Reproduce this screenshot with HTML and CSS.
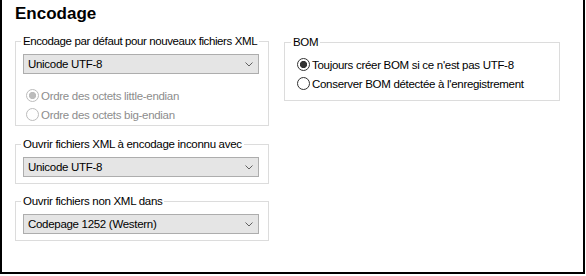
FILE: index.html
```html
<!DOCTYPE html>
<html lang="fr">
<head>
    <meta charset="UTF-8">
    <meta name="viewport" content="width=device-width, initial-scale=1.0">
    <title>Encodage</title>
    <link rel="stylesheet" href="styles.css">
</head>
<body>
    <div class="panel">
        <h1 class="title">Encodage</h1>

        <div class="columns">
            <div class="col-left">
                <fieldset class="group group-default">
                    <legend>Encodage par défaut pour nouveaux fichiers XML</legend>
                    <div class="select">
                        <span>Unicode UTF-8</span>
                        <svg class="chevron" width="8" height="5" viewBox="0 0 8 5"><path d="M0.5 0.5 L4 4 L7.5 0.5" fill="none" stroke="#606060" stroke-width="1"/></svg>
                    </div>
                    <div class="radios disabled">
                        <div class="radio checked"><span class="circle"></span>Ordre des octets little-endian</div>
                        <div class="radio"><span class="circle"></span>Ordre des octets big-endian</div>
                    </div>
                </fieldset>

                <fieldset class="group group-unknown">
                    <legend>Ouvrir fichiers XML à encodage inconnu avec</legend>
                    <div class="select">
                        <span>Unicode UTF-8</span>
                        <svg class="chevron" width="8" height="5" viewBox="0 0 8 5"><path d="M0.5 0.5 L4 4 L7.5 0.5" fill="none" stroke="#606060" stroke-width="1"/></svg>
                    </div>
                </fieldset>

                <fieldset class="group group-nonxml">
                    <legend>Ouvrir fichiers non XML dans</legend>
                    <div class="select">
                        <span>Codepage 1252 (Western)</span>
                        <svg class="chevron" width="8" height="5" viewBox="0 0 8 5"><path d="M0.5 0.5 L4 4 L7.5 0.5" fill="none" stroke="#606060" stroke-width="1"/></svg>
                    </div>
                </fieldset>
            </div>

            <fieldset class="group group-bom">
                <legend>BOM</legend>
                <div class="radios">
                    <div class="radio checked"><span class="circle"></span>Toujours créer BOM si ce n'est pas UTF-8</div>
                    <div class="radio"><span class="circle"></span>Conserver BOM détectée à l'enregistrement</div>
                </div>
            </fieldset>
        </div>
    </div>
</body>
</html>
```

FILE: styles.css
```css
body {
    margin: 0;
    background: #fff;
    font-family: 'Liberation Sans', Arial, sans-serif;
    font-size: 11.5px;
    letter-spacing: -0.3px;
    color: #000;
}
.panel {
    box-sizing: border-box;
    width: 585px;
    height: 274px;
    border: 2px solid #000;
    border-top: none;
    padding: 3px 0 0 13px;
}
.title {
    margin: 0;
    font-size: 17px;
    line-height: 22px;
    font-weight: bold;
    letter-spacing: 0;
}
.columns {
    display: flex;
    align-items: flex-start;
    gap: 15px;
    margin-top: 9px;
}
.col-left {
    display: flex;
    flex-direction: column;
    width: 254px;
}
.group {
    margin: 0;
    min-width: 0;
    border: 1px solid #dcdcdc;
    padding: 6px 9px 6px 7px;
}
.group legend {
    padding: 0 2px;
    margin-left: -2px;
    line-height: 14px;
    white-space: nowrap;
}
.group-default legend {
    letter-spacing: -0.4px;
}
.group-default {
    padding-bottom: 1px;
}
.group-unknown {
    margin-top: 11px;
}
.group-nonxml {
    margin-top: 10px;
}
.group-bom {
    width: 276px;
    box-sizing: border-box;
    margin-top: 1px;
    padding: 6px 8px 7px 8px;
}
.select {
    box-sizing: border-box;
    height: 20px;
    border: 1px solid #adadad;
    background: #e5e5e5;
    display: flex;
    align-items: center;
    justify-content: space-between;
    padding: 0 5px 0 4px;
}
.chevron {
    display: block;
}
.radios {
    margin-top: 12px;
}
.group-bom .radios {
    margin-top: 0;
}
.radio {
    display: flex;
    align-items: center;
    height: 19px;
    gap: 2px;
    padding-left: 3px;
}
.group-bom .radio {
    padding-left: 4px;
}
.circle {
    box-sizing: border-box;
    width: 13px;
    height: 13px;
    border: 1px solid #333;
    border-radius: 50%;
    background: #fff;
    flex: none;
}
.checked .circle {
    background: radial-gradient(circle, #333 0 3.3px, #fff 3.9px);
}
.disabled .radio {
    color: #8d8d8d;
}
.disabled .circle {
    border-color: #bcbcbc;
}
.disabled .checked .circle {
    background: radial-gradient(circle, #bcbcbc 0 3.3px, #fff 3.9px);
}
```
